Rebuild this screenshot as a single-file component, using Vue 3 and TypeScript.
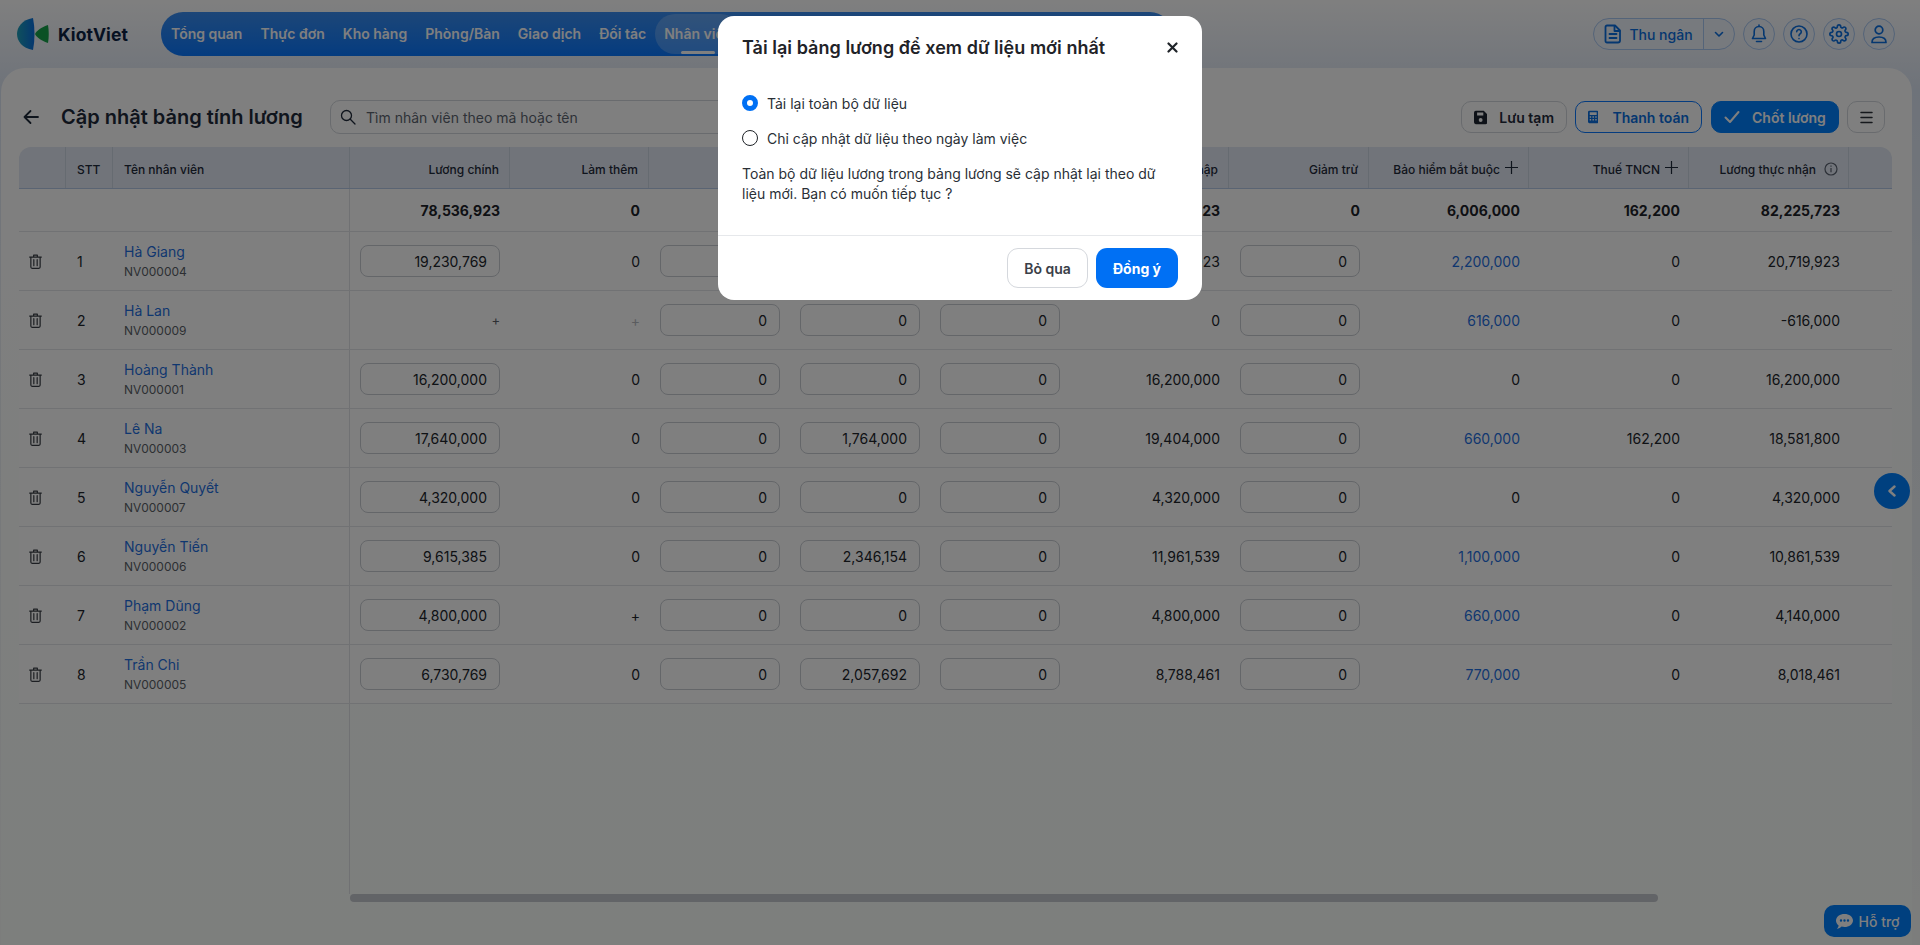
<script setup lang="ts">
interface Row {
  name: string
  code: string
  salary: string
  overtime: string
  inputs: [string, string, string]
  total: string
  insurance: string
  tax: string
  net: string
}

const navItems: string[] = ['Tổng quan', 'Thực đơn', 'Kho hàng', 'Phòng/Bàn', 'Giao dịch', 'Đối tác', 'Nhân viên']

const rows: Row[] = [
  { name: 'Hà Giang', code: 'NV000004', salary: '19,230,769', overtime: '0', inputs: ['', '', ''], total: '22,919,923', insurance: '2,200,000', tax: '0', net: '20,719,923' },
  { name: 'Hà Lan', code: 'NV000009', salary: '+', overtime: '+', inputs: ['0', '0', '0'], total: '0', insurance: '616,000', tax: '0', net: '-616,000' },
  { name: 'Hoàng Thành', code: 'NV000001', salary: '16,200,000', overtime: '0', inputs: ['0', '0', '0'], total: '16,200,000', insurance: '0', tax: '0', net: '16,200,000' },
  { name: 'Lê Na', code: 'NV000003', salary: '17,640,000', overtime: '0', inputs: ['0', '1,764,000', '0'], total: '19,404,000', insurance: '660,000', tax: '162,200', net: '18,581,800' },
  { name: 'Nguyễn Quyết', code: 'NV000007', salary: '4,320,000', overtime: '0', inputs: ['0', '0', '0'], total: '4,320,000', insurance: '0', tax: '0', net: '4,320,000' },
  { name: 'Nguyễn Tiến', code: 'NV000006', salary: '9,615,385', overtime: '0', inputs: ['0', '2,346,154', '0'], total: '11,961,539', insurance: '1,100,000', tax: '0', net: '10,861,539' },
  { name: 'Phạm Dũng', code: 'NV000002', salary: '4,800,000', overtime: '+', inputs: ['0', '0', '0'], total: '4,800,000', insurance: '660,000', tax: '0', net: '4,140,000' },
  { name: 'Trần Chi', code: 'NV000005', salary: '6,730,769', overtime: '0', inputs: ['0', '2,057,692', '0'], total: '8,788,461', insurance: '770,000', tax: '0', net: '8,018,461' },
]
</script>

<template>
  <div class="page">
    <header class="topbar">
      <div class="logo">
        <svg width="34" height="34" viewBox="0 0 34 34">
          <defs>
            <linearGradient id="lg" x1="0" y1="0" x2="1" y2="0">
              <stop offset="0" stop-color="#1fa0b8" />
              <stop offset="1" stop-color="#0a6fe0" />
            </linearGradient>
          </defs>
          <path d="M17 1C6 3 1 10 1 17s5 14 16 16c2-10 2-22 0-32z" fill="url(#lg)" />
          <path d="M32 8C26 10 21 13 19 17c2 4 7 7 13 9 1-6 1-12 0-18z" fill="#17a24a" />
        </svg>
        <span class="brand">KiotViet</span>
      </div>
      <nav class="nav">
        <span v-for="item in navItems" :key="item" class="nav-item" :class="{ active: item === 'Nhân viên' }">{{ item }}</span>
      </nav>
      <div class="top-actions">
        <div class="cashier">
          <span class="cashier-main">
            <svg width="18" height="20" viewBox="0 0 18 20" fill="none" stroke="currentColor" stroke-width="1.8" stroke-linejoin="round" stroke-linecap="round">
              <path d="M3 1.5h8l5 5v10a2 2 0 0 1-2 2H3a1.5 1.5 0 0 1-1.5-1.5V3A1.5 1.5 0 0 1 3 1.5z" />
              <path d="M5.500 10h7M5.500 14h7M10.500 2v5h5" />
            </svg>
            Thu ngân
          </span>
          <span class="cashier-more">
            <svg width="12" height="12" viewBox="0 0 12 12" fill="none" stroke="currentColor" stroke-width="1.6" stroke-linecap="round" stroke-linejoin="round"><path d="M2.500 4.500 6 8l3.500-3.500" /></svg>
          </span>
        </div>
        <span class="circle">
          <svg width="18" height="20" viewBox="0 0 18 20" fill="none" stroke="currentColor" stroke-width="1.6" stroke-linecap="round" stroke-linejoin="round"><path d="M9 2.500c-3 0-4.800 2.300-4.800 5v3.500L2.500 14.500h13L13.800 11V7.500c0-2.700-1.800-5-4.800-5zM9 1v1.500M6.500 17.500h5" /></svg>
        </span>
        <span class="circle">
          <svg width="20" height="20" viewBox="0 0 20 20" fill="none" stroke="currentColor" stroke-width="1.6" stroke-linecap="round"><circle cx="10" cy="10" r="8" /><path d="M7.700 7.800a2.300 2.300 0 1 1 3.500 2c-.8.500-1.200 1-1.200 1.900M10 14.500v.1" /></svg>
        </span>
        <span class="circle">
          <svg width="20" height="20" viewBox="0 0 24 24" fill="none" stroke="currentColor" stroke-width="2" stroke-linecap="round" stroke-linejoin="round"><circle cx="12" cy="12" r="3" /><path d="M19.400 15a1.650 1.650 0 0 0 .33 1.820l.06.06a2 2 0 0 1 0 2.830 2 2 0 0 1-2.830 0l-.06-.06a1.650 1.650 0 0 0-1.820-.33 1.650 1.650 0 0 0-1 1.510V21a2 2 0 0 1-2 2 2 2 0 0 1-2-2v-.09A1.650 1.650 0 0 0 9 19.400a1.650 1.650 0 0 0-1.820.33l-.06.06a2 2 0 0 1-2.830 0 2 2 0 0 1 0-2.830l.06-.06a1.650 1.650 0 0 0 .33-1.820 1.650 1.650 0 0 0-1.510-1H3a2 2 0 0 1-2-2 2 2 0 0 1 2-2h.09A1.650 1.650 0 0 0 4.600 9a1.650 1.650 0 0 0-.33-1.820l-.06-.06a2 2 0 0 1 0-2.830 2 2 0 0 1 2.830 0l.06.06a1.650 1.650 0 0 0 1.820.33H9a1.650 1.650 0 0 0 1-1.510V3a2 2 0 0 1 2-2 2 2 0 0 1 2 2v.09a1.650 1.650 0 0 0 1 1.510 1.650 1.650 0 0 0 1.820-.33l.06-.06a2 2 0 0 1 2.830 0 2 2 0 0 1 0 2.830l-.06.06a1.650 1.650 0 0 0-.33 1.820V9a1.650 1.650 0 0 0 1.510 1H21a2 2 0 0 1 2 2 2 2 0 0 1-2 2h-.09a1.650 1.650 0 0 0-1.510 1z" /></svg>
        </span>
        <span class="circle">
          <svg width="20" height="20" viewBox="0 0 20 20" fill="none" stroke="currentColor" stroke-width="1.7" stroke-linejoin="round"><circle cx="10" cy="6" r="3.800" /><path d="M3 18.500c0-3.500 2.500-5.500 7-5.500s7 2 7 5.500z" /></svg>
        </span>
      </div>
    </header>

    <main class="panel">
      <div class="toolbar">
        <svg class="back" width="16" height="16" viewBox="0 0 16 16" fill="none" stroke="#1f2a3a" stroke-width="1.800" stroke-linecap="round" stroke-linejoin="round"><path d="M15 8H1.500M7.500 2 1.500 8l6 6" /></svg>
        <h1 class="title">Cập nhật bảng tính lương</h1>
        <div class="search">
          <svg width="16" height="16" viewBox="0 0 16 16" fill="none" stroke="#1f2a3a" stroke-width="1.300" stroke-linecap="round"><circle cx="6.500" cy="6.500" r="5" /><path d="m10.300 10.300 4.700 4.700" /></svg>
          <span>Tìm nhân viên theo mã hoặc tên</span>
        </div>
        <div class="tools">
          <button class="btn save">
            <svg width="15" height="15" viewBox="0 0 15 15"><path fill="#1d2430" fill-rule="evenodd" d="M2 0h9l4 4v9a2 2 0 0 1-2 2H2a2 2 0 0 1-2-2V2a2 2 0 0 1 2-2zm1.500 1.800v3.400h7V1.800zM7.500 8.200a2.200 2.200 0 1 0 0 4.400 2.200 2.200 0 0 0 0-4.400z" /></svg>
            <span>Lưu tạm</span>
          </button>
          <button class="btn outline">
            <svg width="15" height="18" viewBox="0 0 15 18"><path fill="#0a6fe0" fill-rule="evenodd" d="M2 0h11a2 2 0 0 1 2 2v14a2 2 0 0 1-2 2H2a2 2 0 0 1-2-2V2a2 2 0 0 1 2-2zm.500 2v4h10V2zm0 6v2h2V8zm4 0v2h2V8zm4 0v2h2V8zm-8 4v2h2v-2zm4 0v2h2v-2zm4 0v2h2v-2z" /></svg>
            <span>Thanh toán</span>
          </button>
          <button class="btn primary">
            <svg width="16" height="14" viewBox="0 0 16 14" fill="none" stroke="#fff" stroke-width="2" stroke-linecap="round" stroke-linejoin="round"><path d="M1.500 7.500 6 12l8.500-10" /></svg>
            <span>Chốt lương</span>
          </button>
          <button class="btn menu" aria-label="menu">
            <svg width="13" height="13" viewBox="0 0 13 13" stroke="#2a3038" stroke-width="1.500" stroke-linecap="round"><path d="M1 1.500h11M1 6.500h11M1 11.500h11" /></svg>
          </button>
        </div>
      </div>

      <section class="table">
        <div class="grid head">
          <div></div>
          <div>STT</div>
          <div>Tên nhân viên</div>
          <div class="r">Lương chính</div>
          <div class="r">Làm thêm</div>
          <div class="r"></div>
          <div class="r"></div>
          <div class="r"></div>
          <div class="r">Tổng thu nhập</div>
          <div class="r">Giảm trừ</div>
          <div class="r">
            Bảo hiểm bắt buộc
            <svg class="plus" width="13" height="13" viewBox="0 0 13 13" stroke="#1f2a3a" stroke-width="1.200"><path d="M6.500 0v13M0 6.500h13" /></svg>
          </div>
          <div class="r">
            Thuế TNCN
            <svg class="plus" width="13" height="13" viewBox="0 0 13 13" stroke="#1f2a3a" stroke-width="1.200"><path d="M6.500 0v13M0 6.500h13" /></svg>
          </div>
          <div class="r">
            Lương thực nhận
            <svg class="info" width="14" height="14" viewBox="0 0 14 14" fill="none" stroke="#5a6270" stroke-width="1.200"><circle cx="7" cy="7" r="6" /><path d="M7 6v4.200M7 3.500v1.200" /></svg>
          </div>
          <div class="last"></div>
        </div>

        <div class="grid totals">
          <div></div>
          <div></div>
          <div class="frozen"></div>
          <div class="r salary-total">78,536,923</div>
          <div class="r">0</div>
          <div class="r"></div>
          <div class="r"></div>
          <div class="r"></div>
          <div class="r">88,393,923</div>
          <div class="r">0</div>
          <div class="r">6,006,000</div>
          <div class="r">162,200</div>
          <div class="r">82,225,723</div>
          <div></div>
        </div>

        <div v-for="(row, i) in rows" :key="row.code" class="grid body-row">
          <div class="trash">
            <svg width="13" height="15" viewBox="0 0 14 16" fill="none" stroke="#3a3f46" stroke-width="1.300" stroke-linecap="round" stroke-linejoin="round"><path d="M.7 3.200h12.600M5 3V1.200h4V3M2 3.200V14a1.300 1.300 0 0 0 1.300 1.300h7.400A1.300 1.300 0 0 0 12 14V3.200M5.200 6v6.500M8.800 6v6.500" /></svg>
          </div>
          <div class="stt">{{ i + 1 }}</div>
          <div class="frozen who">
            <a class="name">{{ row.name }}</a>
            <span class="code">{{ row.code }}</span>
          </div>
          <div class="r cell-salary">
            <span v-if="row.salary === '+'" class="add">+</span>
            <span v-else class="input wide">{{ row.salary }}</span>
          </div>
          <div class="r" :class="{ faint: i === 1 }">{{ row.overtime }}</div>
          <div v-for="(v, k) in row.inputs" :key="k" class="r"><span class="input">{{ v }}</span></div>
          <div class="r">{{ row.total }}</div>
          <div class="r"><span class="input">0</span></div>
          <div class="r" :class="{ link: row.insurance !== '0' }">{{ row.insurance }}</div>
          <div class="r">{{ row.tax }}</div>
          <div class="r">{{ row.net }}</div>
          <div></div>
        </div>

        <div class="filler"></div>
        <div class="scrollbar"></div>
      </section>
    </main>

    <button class="collapse" aria-label="collapse">
      <svg width="10" height="12" viewBox="0 0 10 12" fill="none" stroke="#fff" stroke-width="2.400" stroke-linecap="round" stroke-linejoin="round"><path d="M7.500 1.500 2.500 6l5 4.500" /></svg>
    </button>
    <button class="support">
      <svg width="17" height="15" viewBox="0 0 17 15"><path fill="#fff" fill-rule="evenodd" d="M8.500 0C13 0 17 2.700 17 6.500S13 13 8.500 13c-1 0-2-.15-2.900-.4C4.500 13.700 3 14.700.8 15c1-1 1.700-2.200 1.800-3.500C1 10.300 0 8.500 0 6.500 0 2.700 4 0 8.500 0zM5 5.300a1.200 1.200 0 1 0 0 2.400 1.200 1.200 0 0 0 0-2.400zm3.500 0a1.200 1.200 0 1 0 0 2.400 1.200 1.200 0 0 0 0-2.400zm3.500 0a1.200 1.200 0 1 0 0 2.400 1.200 1.200 0 0 0 0-2.400z" /></svg>
      Hỗ trợ
    </button>

    <div class="overlay">
      <div class="modal" role="dialog">
        <div class="modal-head">
          <h2>Tải lại bảng lương để xem dữ liệu mới nhất</h2>
          <svg width="11" height="11" viewBox="0 0 11 11" stroke="#1f2328" stroke-width="2.200" stroke-linecap="round"><path d="m1.500 1.500 8 8M9.500 1.500l-8 8" /></svg>
        </div>
        <div class="modal-body">
          <label class="radio"><span class="dot on"></span>Tải lại toàn bộ dữ liệu</label>
          <label class="radio"><span class="dot"></span>Chỉ cập nhật dữ liệu theo ngày làm việc</label>
          <p>Toàn bộ dữ liệu lương trong bảng lương sẽ cập nhật lại theo dữ liệu mới. Bạn có muốn tiếp tục ?</p>
        </div>
        <div class="modal-foot">
          <button class="m-btn ghost">Bỏ qua</button>
          <button class="m-btn solid">Đồng ý</button>
        </div>
      </div>
    </div>
  </div>
</template>

<style scoped>
* { box-sizing: border-box; }
.page {
  position: relative;
  width: 1920px;
  height: 945px;
  overflow: hidden;
  display: flex;
  flex-direction: column;
  font-family: Inter, "Noto Sans", sans-serif;
  font-size: 14px;
  color: #20242b;
  background: linear-gradient(#fff 0, #dde6f4 90px, #e9eef4 300px, #f8faf9 900px);
}
button { font-family: inherit; }
.topbar {
  height: 68px;
  flex: none;
  display: flex;
  align-items: flex-start;
  padding: 12px 25px 0 16px;
}
.logo { display: flex; align-items: center; height: 44px; gap: 8px; width: 145px; }
.brand { font-size: 17.5px; font-weight: 700; color: #0c2344; letter-spacing: .1px; }
.nav {
  width: 1011px;
  height: 44px;
  border-radius: 22px;
  background: linear-gradient(#3a8df0, #0a78ff);
  display: flex;
  align-items: center;
  padding-left: 10px;
  gap: 18px;
  color: #fff;
  font-weight: 600;
  white-space: nowrap;
}
.nav-item { position: relative; line-height: 40px; }
.nav-item.active {
  margin-left: -9px;
  margin-right: -9px;
  padding: 0 9px;
  border-radius: 20px;
  background: rgba(255, 255, 255, .22);
}
.nav-item.active::after {
  content: "";
  position: absolute;
  left: 26px;
  right: 26px;
  bottom: 0;
  height: 3px;
  border-radius: 2px;
  background: #fff;
}
.top-actions {
  margin-left: auto;
  margin-top: 6px;
  display: flex;
  gap: 8px;
  color: #0a6fe0;
}
.cashier {
  width: 142px;
  height: 32px;
  border-radius: 16px;
  border: 1px solid #a9c8f2;
  background: #eef4fc;
  display: flex;
  align-items: center;
  font-weight: 500;
}
.cashier-main { flex: 1; display: flex; align-items: center; justify-content: center; gap: 7px; height: 100%; border-right: 1px solid #a9c8f2; }
.cashier-more { width: 30px; display: flex; justify-content: center; }
.circle {
  width: 32px;
  height: 32px;
  border-radius: 50%;
  border: 1px solid #a9c8f2;
  background: #eef4fc;
  display: flex;
  align-items: center;
  justify-content: center;
}
.panel {
  flex: 1;
  min-height: 0;
  margin-right: 8px;
  margin-left: 1px;
  padding: 32px 20px 0 18px;
  border-radius: 24px 24px 0 0;
  background: linear-gradient(#fff, #fafffb);
  display: flex;
  flex-direction: column;
}
.toolbar { height: 34px; flex: none; display: flex; align-items: center; padding: 0 7px 0 4px; }
.back { flex: none; }
.title { margin: 0 0 0 22px; font-size: 20px; font-weight: 600; color: #1f2a3a; white-space: nowrap; width: 241px; }
.search {
  margin-left: 28px;
  width: 800px;
  height: 34px;
  border: 1px solid #d2d6dc;
  border-radius: 10px;
  display: flex;
  align-items: center;
  gap: 10px;
  padding-left: 9px;
  color: #5d6570;
  background: #fff;
}
.tools { margin-left: auto; display: flex; gap: 8px; }
.btn {
  height: 32px;
  display: flex;
  align-items: center;
  gap: 12px;
  padding: 0 12px;
  border-radius: 10px;
  border: 1px solid #d2d6dc;
  background: #fff;
  font-size: 14px;
  font-weight: 600;
  color: #1f2a3a;
  white-space: nowrap;
}
.btn.save { width: 106px; }
.btn.outline { border-color: #0a78ff; color: #0a6fe0; width: 127px; gap: 14px; }
.btn.primary { background: #0080ff; border-color: #0080ff; color: #fff; width: 128px; margin-left: 1px; }
.btn.menu { width: 38px; justify-content: center; padding: 0; }
.table {
  flex: 1;
  min-height: 0;
  margin-top: 13px;
  width: 1873px;
  display: flex;
  flex-direction: column;
}
.grid {
  display: grid;
  grid-template-columns: 47px 47px 237px 160px 139px 140px 140px 140px 160px 140px 160px 160px 160px 43px;
  flex: none;
}
.head {
  height: 42px;
  background: #e2e8f4;
  border-bottom: 1px solid #b4c9e6;
  border-radius: 12px 12px 0 0;
  font-size: 12px;
  font-weight: 500;
  color: #1f2a3a;
}
.head > div {
  display: flex;
  align-items: center;
  border-right: 1px solid #cdd6e3;
  padding-left: 11px;
  padding-top: 3px;
  white-space: nowrap;
}
.head > .last { border-right: 0; }
.head > .r { justify-content: flex-end; padding: 3px 10px 0 0; }
.plus { margin-left: 5px; margin-top: -3px; }
.info { margin-left: 8px; }
.totals {
  height: 43px;
  font-weight: 700;
  border-bottom: 1px solid #e3e5e8;
  color: #1d2229;
}
.r { display: flex; align-items: center; justify-content: flex-end; padding-right: 9px; }
.salary-total { padding-right: 10px; }
.frozen { border-right: 1px solid #e0e2e6; }
.body-row { height: 59px; border-bottom: 1px solid #e3e5e8; background: #fff; }
.trash { display: flex; align-items: center; justify-content: center; padding-right: 15px; }
.stt { display: flex; align-items: center; padding-left: 11px; }
.who { display: flex; flex-direction: column; justify-content: center; padding-left: 11px; gap: 4px; }
.name { color: #1f6fe0; line-height: 17px; }
.code { font-size: 12px; color: #5a5f67; line-height: 15px; }
.input {
  width: 120px;
  height: 32px;
  border: 1px solid #c9cdd3;
  border-radius: 8px;
  background: #fff;
  display: flex;
  align-items: center;
  justify-content: flex-end;
  padding-right: 12px;
}
.input.wide { width: 140px; }
.cell-salary { padding-right: 10px; }
.add { font-size: 13px; color: #5a5f67; }
.faint { color: #b5b9bf; }
.link { color: #1f6fe0; }
.filler { flex: 1; min-height: 0; width: 331px; border-right: 1px solid #e0e2e6; }
.scrollbar {
  flex: none;
  width: 1308px;
  height: 8px;
  margin: 0 0 43px 331px;
  border-radius: 4px;
  background: #c5c8cf;
}
.collapse {
  position: absolute;
  left: 1874px;
  top: 473px;
  width: 36px;
  height: 36px;
  border: 0;
  border-radius: 50%;
  background: #0080ff;
  display: flex;
  align-items: center;
  justify-content: center;
  padding: 0;
}
.support {
  position: absolute;
  left: 1824px;
  top: 905px;
  width: 87px;
  height: 32px;
  border: 0;
  border-radius: 10px;
  background: #0080ff;
  color: #fff;
  font-size: 14px;
  font-weight: 500;
  display: flex;
  align-items: center;
  justify-content: center;
  gap: 6px;
  padding: 0;
}
.overlay {
  position: absolute;
  inset: 0;
  background: rgba(0, 0, 0, .5);
}
.modal {
  position: absolute;
  left: 718px;
  top: 16px;
  width: 484px;
  height: 284px;
  border-radius: 16px;
  background: #fff;
  display: flex;
  flex-direction: column;
  color: #2a2f36;
}
.modal-head {
  height: 62px;
  flex: none;
  display: flex;
  align-items: center;
  justify-content: space-between;
  padding: 0 24px;
}
.modal-head h2 { margin: 0; font-size: 18px; font-weight: 600; color: #1f2328; white-space: nowrap; letter-spacing: .03px; }
.modal-body { flex: 1; padding: 15px 24px 0; }
.radio { display: flex; align-items: center; gap: 9px; height: 20px; margin-bottom: 15px; }
.dot { width: 16px; height: 16px; border-radius: 50%; border: 1.500px solid #1f2328; flex: none; }
.dot.on { border: 5px solid #0070f4; background: #fff; }
.modal-body p { margin: 0; line-height: 20px; padding-top: 1px; }
.modal-foot {
  height: 65px;
  flex: none;
  border-top: 1px solid #e6e8eb;
  display: flex;
  justify-content: flex-end;
  align-items: flex-start;
  gap: 8px;
  padding: 12px 24px 0;
}
.m-btn { height: 40px; border-radius: 11px; font-size: 14px; font-weight: 600; padding: 0; }
.ghost { width: 81px; background: #fff; border: 1px solid #d5d8dd; color: #3a4048; }
.solid { width: 82px; background: #0070f4; border: 0; color: #fff; font-weight: 700; }
</style>

<style>
html, body { margin: 0; padding: 0; }
</style>
